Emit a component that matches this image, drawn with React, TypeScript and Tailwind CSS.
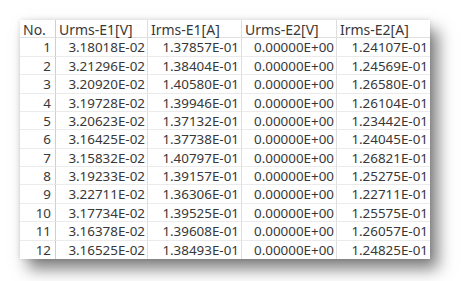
import React from "react";

const rows: [string, string, string, string, string][] = [
  ["1", "3.18018E-02", "1.37857E-01", "0.00000E+00", "1.24107E-01"],
  ["2", "3.21296E-02", "1.38404E-01", "0.00000E+00", "1.24569E-01"],
  ["3", "3.20920E-02", "1.40580E-01", "0.00000E+00", "1.26580E-01"],
  ["4", "3.19728E-02", "1.39946E-01", "0.00000E+00", "1.26104E-01"],
  ["5", "3.20623E-02", "1.37132E-01", "0.00000E+00", "1.23442E-01"],
  ["6", "3.16425E-02", "1.37738E-01", "0.00000E+00", "1.24045E-01"],
  ["7", "3.15832E-02", "1.40797E-01", "0.00000E+00", "1.26821E-01"],
  ["8", "3.19233E-02", "1.39157E-01", "0.00000E+00", "1.25275E-01"],
  ["9", "3.22711E-02", "1.36306E-01", "0.00000E+00", "1.22711E-01"],
  ["10", "3.17734E-02", "1.39525E-01", "0.00000E+00", "1.25575E-01"],
  ["11", "3.16378E-02", "1.39608E-01", "0.00000E+00", "1.26057E-01"],
  ["12", "3.16525E-02", "1.38493E-01", "0.00000E+00", "1.24825E-01"],
];

const headers = ["No.", "Urms-E1[V]", "Irms-E1[A]", "Urms-E2[V]", "Irms-E2[A]"];

export default function App() {
  return (
    <div className="w-[472px] h-[281px] bg-white pt-[20px] pl-[20px] overflow-hidden">
      <div
        className="w-[410px] h-[239px] bg-white shadow-[0_0_5px_rgba(0,0,0,0.12),8px_10px_15px_rgba(0,0,0,0.5)] grid grid-cols-[36px_92px_94px_95px_93px] grid-rows-[repeat(13,1fr)] text-[13.4px] text-[#383838]"
        style={{ fontFamily: '"Noto Sans", "Liberation Sans", sans-serif' }}
      >
        {headers.map((h, i) => (
          <div
            key={h}
            className={`flex items-center pt-[2px] pl-[3px] text-[14px] border-b border-[#e0e0e0] ${i < 4 ? "border-r" : ""} ${i === 0 ? "border-r-[#cfcfcf]" : "border-r-[#dedede]"} leading-none`}
          >
            {h}
          </div>
        ))}
        {rows.map((r, ri) =>
          r.map((c, ci) => (
            <div
              key={`${ri}-${ci}`}
              className={`flex items-center justify-end pt-[2px] ${ci === 0 ? "pr-[4px] border-r-[#cfcfcf]" : "pr-[2px] border-r-[#dedede]"} ${ci < 4 ? "border-r" : ""} ${ri < 11 ? "border-b border-[#ebebeb]" : ""} leading-none`}
            >
              {c}
            </div>
          ))
        )}
      </div>
    </div>
  );
}
